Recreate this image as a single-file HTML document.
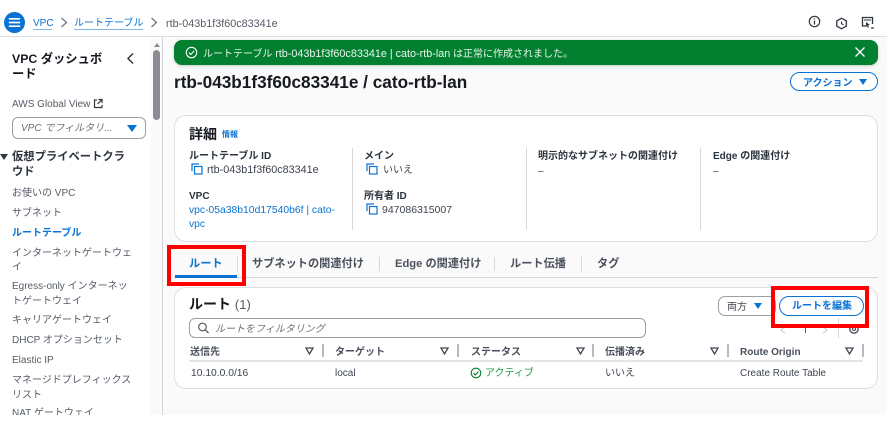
<!DOCTYPE html>
<html><head><meta charset="utf-8"><style>
html,body{margin:0;padding:0;background:#fff}
#p{position:relative;width:895px;height:433px;overflow:hidden;background:#fff;font-family:"Liberation Sans","Noto Sans CJK JP",sans-serif;font-size:10px;color:#3d4450}
.t{position:absolute;white-space:nowrap;line-height:14px;margin-top:2px}
.a{position:absolute}
.b{font-weight:700}
.l{color:#0972d3}
.n{color:#555c66;font-size:10px}
.lab{font-weight:700;color:#2b333e;font-size:10px}
.v{width:1px;background:#d5d8dc;position:absolute}
.card{position:absolute;background:#fff;border:1px solid #dcdfe3;border-radius:12px;box-sizing:border-box}
.th{font-weight:700;color:#4a515c;font-size:10px}
.red{position:absolute;border:4px solid #f00;box-sizing:border-box}
.tri{position:absolute;width:0;height:0;border-left:5px solid transparent;border-right:5px solid transparent;border-top:7px solid #0972d3}
.sort{position:absolute;width:9px;height:8px}
.tab{font-weight:700;color:#4a515c;font-size:11.200px}
.w{font-size:10.800px}
</style></head><body><div id="p">

<div class="a" style="left:0;top:37px;width:887px;height:378px;background:#fafafa"></div>
<div class="a" style="left:0;top:36px;width:887px;height:1px;background:#dcdee1"></div>
<div class="a" style="left:0;top:37px;width:151px;height:378px;background:#fff"></div>
<div class="a" style="left:162px;top:37px;width:1px;height:378px;background:#d2d4d8"></div>

<svg class="a" style="left:4px;top:12px" width="21" height="21" viewBox="0 0 21 21"><circle cx="10.5" cy="10.5" r="10.5" fill="#0972d3"/><path d="M5.5 6.8h10M5.5 10.5h10M5.500 14.200h10" stroke="#fff" stroke-width="1.7" stroke-linecap="round"/></svg>
<div class="t l" style="left:33px;top:15px">VPC</div>
<div class="a" style="left:33px;top:29px;width:19px;height:1px;background:#7fb5e8"></div>
<svg class="a" style="left:60px;top:17px" width="8" height="11" viewBox="0 0 8 11"><path d="M1.5 1l5 4.500-5 4.500" fill="none" stroke="#6b727c" stroke-width="1.200"/></svg>
<div class="t l" style="left:74px;top:15px">ルートテーブル</div>
<div class="a" style="left:74px;top:29px;width:69px;height:1px;background:#7fb5e8"></div>
<svg class="a" style="left:150px;top:17px" width="8" height="11" viewBox="0 0 8 11"><path d="M1.5 1l5 4.500-5 4.500" fill="none" stroke="#6b727c" stroke-width="1.200"/></svg>
<div class="t w" style="left:166px;top:15px;color:#555c66">rtb-043b1f3f60c83341e</div>

<svg class="a" style="left:808px;top:15px" width="13" height="13" viewBox="0 0 13 13"><circle cx="6.5" cy="6.5" r="5.2" fill="none" stroke="#30363f" stroke-width="1.2"/><path d="M6.5 5.6v4M6.5 3.2v1.2" stroke="#30363f" stroke-width="1.3"/></svg>
<svg class="a" style="left:835px;top:17px" width="13" height="13" viewBox="0 0 13 13"><path d="M6.5 1.2l4.8 2.7v5.2l-4.8 2.7-4.7-2.7V3.900z" fill="none" stroke="#30363f" stroke-width="1.3"/><path d="M6.500 4.500v2.200l2 1.200" fill="none" stroke="#30363f" stroke-width="1.100"/></svg>
<svg class="a" style="left:861px;top:16px" width="14" height="14" viewBox="0 0 14 14"><path d="M5 10H1.500V1.500h10V8" fill="none" stroke="#30363f" stroke-width="1.300"/><path d="M3 3.500h7v1H3z" fill="#30363f"/><path d="M5 6l4 3-2 .4 1 2-1 .5-1-2-1 1.300z" fill="#30363f"/><path d="M10 12h3" stroke="#30363f" stroke-width="1.200"/></svg>

<div class="a" style="left:153px;top:50px;width:7px;height:70px;background:#8a8d91;border-radius:4px"></div>
<svg class="a" style="left:153px;top:42px" width="8" height="6" viewBox="0 0 8 6"><path d="M4 1l3 4H1z" fill="#8a8d91"/></svg>

<div class="t b" style="left:12px;top:49.500px;font-size:12.300px;line-height:15px;color:#16191f;width:95px;white-space:normal">VPC ダッシュボード</div>
<svg class="a" style="left:126px;top:52px" width="9" height="13" viewBox="0 0 9 13"><path d="M7 1.500L2 6.500l5 5" fill="none" stroke="#30363f" stroke-width="1.500"/></svg>
<div class="t n" style="left:12px;top:96px">AWS Global View</div>
<svg class="a" style="left:93px;top:98px" width="10" height="11" viewBox="0 0 10 11"><path d="M4 2H1.500v7.500H9V7M5.500 1.500H9V5M9 1.500L4.500 6" fill="none" stroke="#30363f" stroke-width="1.200"/></svg>
<div class="a" style="left:12px;top:117px;width:134px;height:22px;border:1px solid #9a9fa6;border-radius:6px;box-sizing:border-box;background:#fff"></div>
<div class="t n" style="left:21px;top:120px;font-style:italic;color:#6b727c">VPC でフィルタリ...</div>
<div class="tri" style="left:127px;top:125px;border-top-color:#0972d3"></div>

<div class="a" style="left:0;top:154px;width:0;height:0;border-left:4px solid transparent;border-right:4px solid transparent;border-top:6px solid #30363f"></div>
<div class="t b" style="left:12px;top:147.500px;font-size:11.300px;line-height:15px;color:#2b333e;width:118px;white-space:normal">仮想プライベートクラウド</div>
<div class="t n" style="left:12px;top:185px">お使いの VPC</div>
<div class="t n" style="left:12px;top:205px">サブネット</div>
<div class="t b l" style="left:12px;top:225px">ルートテーブル</div>
<div class="t n" style="left:12px;top:244.500px;line-height:14.500px;width:122px;white-space:normal">インターネットゲートウェイ</div>
<div class="t n" style="left:12px;top:278px;line-height:14.500px;width:122px;white-space:normal">Egress-only インターネットゲートウェイ</div>
<div class="t n" style="left:12px;top:312px">キャリアゲートウェイ</div>
<div class="t n" style="left:12px;top:332px">DHCP オプションセット</div>
<div class="t n" style="left:12px;top:352px">Elastic IP</div>
<div class="t n" style="left:12px;top:372px;line-height:14.500px;width:122px;white-space:normal">マネージドプレフィックスリスト</div>
<div class="t n" style="left:12px;top:405px">NAT ゲートウェイ</div>
<div class="a" style="left:0;top:415px;width:163px;height:18px;background:#fff"></div>

<div class="a" style="left:174px;top:40px;width:704px;height:25px;background:#037f30;border-radius:8px;box-shadow:0 1px 3px rgba(0,0,0,.2)"></div>
<svg class="a" style="left:185px;top:46px" width="13" height="13" viewBox="0 0 13 13"><circle cx="6.500" cy="6.500" r="5.200" fill="none" stroke="#fff" stroke-width="1.100"/><path d="M4 6.700l1.800 1.800 3.300-3.600" fill="none" stroke="#fff" stroke-width="1.100"/></svg>
<div class="t" style="left:203px;top:45px;color:#e9f5ec">ルートテーブル <span class="w">rtb-043b1f3f60c83341e | cato-rtb-lan</span> は正常に作成されました。</div>
<svg class="a" style="left:854px;top:46px" width="12" height="12" viewBox="0 0 12 12"><path d="M1.500 1.500l9 9M10.500 1.500l-9 9" stroke="#fff" stroke-width="1.300"/></svg>

<div class="t b" style="left:174px;top:69px;font-size:17.200px;line-height:22px;color:#16191f">rtb-043b1f3f60c83341e / cato-rtb-lan</div>
<div class="a" style="left:790px;top:72px;width:88px;height:19px;border:1px solid #0972d3;border-radius:10px;box-sizing:border-box;background:#fff"></div>
<div class="t b l" style="left:803px;top:75px">アクション</div>
<div class="tri" style="left:859px;top:79px;border-left-width:4px;border-right-width:4px;border-top-width:6px"></div>

<div class="card" style="left:174px;top:115px;width:704px;height:127px"></div>
<div class="t b" style="left:189px;top:122px;font-size:14px;line-height:20px;color:#16191f">詳細</div>
<div class="t b l" style="left:222px;top:126px;font-size:8px">情報</div>

<div class="v" style="left:352px;top:148px;height:82px"></div>
<div class="v" style="left:526px;top:148px;height:82px"></div>
<div class="v" style="left:700px;top:148px;height:82px"></div>

<div class="t lab" style="left:189px;top:148px">ルートテーブル ID</div>
<svg class="a" style="left:191px;top:163px" width="12" height="12" viewBox="0 0 12 12"><path d="M1 8V1h7" fill="none" stroke="#0972d3" stroke-width="1.200"/><rect x="3.500" y="3.500" width="7.500" height="7.500" fill="none" stroke="#0972d3" stroke-width="1.200"/></svg>
<div class="t w" style="left:207px;top:161px">rtb-043b1f3f60c83341e</div>
<div class="t lab" style="left:189px;top:188px">VPC</div>
<div class="t l" style="left:189px;top:202px;font-size:10.350px">vpc-05a38b10d17540b6f | cato-</div>
<div class="t l" style="left:189px;top:216px;font-size:10.350px">vpc</div>

<div class="t lab" style="left:364px;top:148px">メイン</div>
<svg class="a" style="left:366px;top:163px" width="12" height="12" viewBox="0 0 12 12"><path d="M1 8V1h7" fill="none" stroke="#0972d3" stroke-width="1.200"/><rect x="3.500" y="3.500" width="7.500" height="7.500" fill="none" stroke="#0972d3" stroke-width="1.200"/></svg>
<div class="t" style="left:383px;top:162px">いいえ</div>
<div class="t lab" style="left:364px;top:188px">所有者 ID</div>
<svg class="a" style="left:366px;top:203px" width="12" height="12" viewBox="0 0 12 12"><path d="M1 8V1h7" fill="none" stroke="#0972d3" stroke-width="1.200"/><rect x="3.500" y="3.500" width="7.500" height="7.500" fill="none" stroke="#0972d3" stroke-width="1.200"/></svg>
<div class="t" style="left:382px;top:201px;font-size:10.500px">947086315007</div>

<div class="t lab" style="left:538px;top:148px">明示的なサブネットの関連付け</div>
<div class="t" style="left:538px;top:163px">–</div>
<div class="t lab" style="left:713px;top:148px">Edge の関連付け</div>
<div class="t" style="left:713px;top:163px">–</div>

<div class="a" style="left:174px;top:277px;width:704px;height:1px;background:#d5d8dc"></div>
<div class="t tab l" style="left:189px;top:255px;color:#0972d3">ルート</div>
<div class="a" style="left:175px;top:275px;width:62px;height:2.500px;background:#0972d3"></div>
<div class="v" style="left:237px;top:257px;height:14px"></div>
<div class="t tab" style="left:252px;top:255px">サブネットの関連付け</div>
<div class="v" style="left:379px;top:257px;height:14px"></div>
<div class="t tab" style="left:395px;top:255px">Edge の関連付け</div>
<div class="v" style="left:494px;top:257px;height:14px"></div>
<div class="t tab" style="left:510px;top:255px">ルート伝播</div>
<div class="v" style="left:581px;top:257px;height:14px"></div>
<div class="t tab" style="left:597px;top:255px">タグ</div>

<div class="card" style="left:174px;top:287px;width:704px;height:102px"></div>
<div class="t b" style="left:189px;top:292px;font-size:14px;line-height:20px;color:#16191f">ルート <span style="font-weight:400;color:#555c66;font-size:13px">(1)</span></div>
<div class="a" style="left:718px;top:296px;width:58px;height:20px;border:1px solid #9a9fa6;border-radius:7px;box-sizing:border-box;background:#fff"></div>
<div class="t" style="left:727px;top:299px;color:#424650">両方</div>
<div class="tri" style="left:754px;top:303px;border-left-width:4px;border-right-width:4px;border-top-width:6px"></div>
<div class="a" style="left:779px;top:296px;width:85px;height:20px;border:1px solid #0972d3;border-radius:10px;box-sizing:border-box;background:#fff"></div>
<div class="t b l" style="left:792px;top:298px">ルートを編集</div>

<div class="a" style="left:189px;top:318px;width:457px;height:20px;border:1px solid #9a9fa6;border-radius:6px;box-sizing:border-box;background:#fff"></div>
<svg class="a" style="left:197px;top:322px" width="13" height="12" viewBox="0 0 13 12"><circle cx="5.500" cy="5" r="3.800" fill="none" stroke="#555c66" stroke-width="1.200"/><path d="M8.500 8l3 3" stroke="#555c66" stroke-width="1.300"/></svg>
<div class="t" style="left:215px;top:321px;font-style:italic;color:#6b727c">ルートをフィルタリング</div>
<svg class="a" style="left:780px;top:326px" width="6" height="8" viewBox="0 0 6 8"><path d="M5 1L1 4l4 3" fill="none" stroke="#c4c7cb"/></svg>
<div class="a" style="left:805px;top:328px;width:1px;height:5px;background:#555c66"></div>
<svg class="a" style="left:822px;top:326px" width="6" height="8" viewBox="0 0 6 8"><path d="M1 1l4 3-4 3" fill="none" stroke="#c4c7cb"/></svg>
<div class="v" style="left:838px;top:318px;height:20px"></div>
<svg class="a" style="left:848px;top:323px" width="12" height="12" viewBox="0 0 12 12"><circle cx="6" cy="6" r="4.200" fill="none" stroke="#424650" stroke-width="1.300"/><circle cx="6" cy="6" r="1.500" fill="none" stroke="#424650"/></svg>

<div class="t th" style="left:190px;top:344px">送信先</div>
<svg class="sort" style="left:305px;top:347px" viewBox="0 0 9 8"><path d="M1 1h7L4.500 7z" fill="none" stroke="#424650" stroke-width="1.300"/></svg>
<div class="a" style="left:322px;top:344px;width:1.500px;height:13px;background:#b6bac0"></div>
<div class="t th" style="left:335px;top:344px">ターゲット</div>
<svg class="sort" style="left:440px;top:347px" viewBox="0 0 9 8"><path d="M1 1h7L4.500 7z" fill="none" stroke="#424650" stroke-width="1.300"/></svg>
<div class="a" style="left:457px;top:344px;width:1.500px;height:13px;background:#b6bac0"></div>
<div class="t th" style="left:471px;top:344px">ステータス</div>
<svg class="sort" style="left:576px;top:347px" viewBox="0 0 9 8"><path d="M1 1h7L4.500 7z" fill="none" stroke="#424650" stroke-width="1.300"/></svg>
<div class="a" style="left:592px;top:344px;width:1.500px;height:13px;background:#b6bac0"></div>
<div class="t th" style="left:605px;top:344px">伝播済み</div>
<svg class="sort" style="left:710px;top:347px" viewBox="0 0 9 8"><path d="M1 1h7L4.500 7z" fill="none" stroke="#424650" stroke-width="1.300"/></svg>
<div class="a" style="left:727px;top:344px;width:1.500px;height:13px;background:#b6bac0"></div>
<div class="t th" style="left:740px;top:344px">Route Origin</div>
<svg class="sort" style="left:845px;top:347px" viewBox="0 0 9 8"><path d="M1 1h7L4.500 7z" fill="none" stroke="#424650" stroke-width="1.300"/></svg>
<div class="a" style="left:862px;top:344px;width:1.500px;height:13px;background:#b6bac0"></div>
<div class="a" style="left:189px;top:360px;width:674px;height:1.500px;background:#e2e4e7"></div>

<div class="t" style="left:191px;top:365px;font-size:10.300px">10.10.0.0/16</div>
<div class="t" style="left:335px;top:365px">local</div>
<svg class="a" style="left:470px;top:367px" width="12" height="12" viewBox="0 0 12 12"><circle cx="6" cy="6" r="4.800" fill="none" stroke="#037f30" stroke-width="1.100"/><path d="M3.500 6.200l1.800 1.800 3.200-3.500" fill="none" stroke="#037f30" stroke-width="1.100"/></svg>
<div class="t" style="left:485px;top:365px;color:#23994e">アクティブ</div>
<div class="t" style="left:605px;top:365px">いいえ</div>
<div class="t" style="left:740px;top:365px">Create Route Table</div>

<div class="red" style="left:167px;top:245px;width:79px;height:41px"></div>
<div class="red" style="left:771px;top:286px;width:98px;height:42px"></div>
</div></body></html>
